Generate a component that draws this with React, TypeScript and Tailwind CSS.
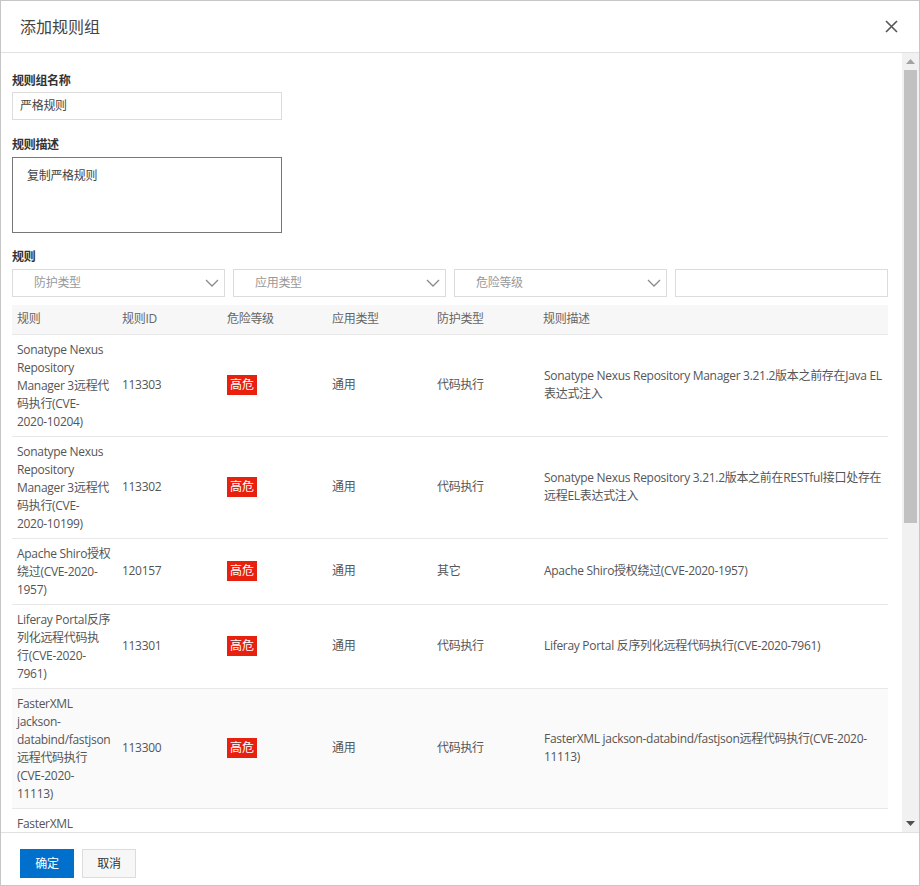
import React from 'react';

interface RuleRow {
  name: string[];
  id: string;
  level: string;
  app: string;
  guard: string;
  desc: string[];
  highlight?: boolean;
}

const rows: RuleRow[] = [
  {
    name: ['Sonatype Nexus', 'Repository', 'Manager 3远程代', '码执行(CVE-', '2020-10204)'],
    id: '113303',
    level: '高危',
    app: '通用',
    guard: '代码执行',
    desc: ['Sonatype Nexus Repository Manager 3.21.2版本之前存在Java EL', '表达式注入'],
  },
  {
    name: ['Sonatype Nexus', 'Repository', 'Manager 3远程代', '码执行(CVE-', '2020-10199)'],
    id: '113302',
    level: '高危',
    app: '通用',
    guard: '代码执行',
    desc: ['Sonatype Nexus Repository 3.21.2版本之前在RESTful接口处存在', '远程EL表达式注入'],
  },
  {
    name: ['Apache Shiro授权', '绕过(CVE-2020-', '1957)'],
    id: '120157',
    level: '高危',
    app: '通用',
    guard: '其它',
    desc: ['Apache Shiro授权绕过(CVE-2020-1957)'],
  },
  {
    name: ['Liferay Portal反序', '列化远程代码执', '行(CVE-2020-', '7961)'],
    id: '113301',
    level: '高危',
    app: '通用',
    guard: '代码执行',
    desc: ['Liferay Portal 反序列化远程代码执行(CVE-2020-7961)'],
  },
  {
    name: ['FasterXML', 'jackson-', 'databind/fastjson', '远程代码执行', '(CVE-2020-', '11113)'],
    id: '113300',
    level: '高危',
    app: '通用',
    guard: '代码执行',
    desc: ['FasterXML jackson-databind/fastjson远程代码执行(CVE-2020-', '11113)'],
    highlight: true,
  },
];

const Chevron = () => (
  <svg width="14" height="8" viewBox="0 0 14 8" fill="none" className="shrink-0">
    <polyline points="1,1 7,7 13,1" stroke="#8a8a8a" strokeWidth="1.3" />
  </svg>
);

const FilterSelect = ({ label }: { label: string }) => (
  <div className="flex h-[28px] items-center justify-between border border-[#dcdcdc] bg-white pl-[21px] pr-[5px]">
    <span className="text-[#999]">{label}</span>
    <Chevron />
  </div>
);

const Lines = ({ lines }: { lines: string[] }) => (
  <div>
    {lines.map((l, i) => (
      <div key={i} className="whitespace-nowrap">
        {l}
      </div>
    ))}
  </div>
);

export default function App() {
  return (
    <div
      className="flex h-[886px] w-[920px] flex-col border border-[#c6c6c6] bg-white text-[12px] leading-[18px] tracking-[-0.3px] text-[#555]"
      style={{ fontFamily: '"Open Sans", "Noto Sans CJK SC", sans-serif' }}
    >
      <div className="flex h-[52px] shrink-0 items-center justify-between border-b border-[#e1e1e1] pl-[19px] pr-[21px]">
        <span className="text-[16px] tracking-normal text-[#444]">添加规则组</span>
        <svg width="13" height="13" viewBox="0 0 13 13">
          <path d="M1 1L12 12M12 1L1 12" stroke="#555" strokeWidth="1.6" />
        </svg>
      </div>

      <div className="flex min-h-0 flex-1">
        <div className="min-w-0 flex-1 overflow-hidden pl-[11px] pr-[14px] pt-[19px]">
          <div className="font-bold text-[#333]">规则组名称</div>
          <div className="mt-[2px] flex h-[28px] w-[270px] items-center border border-[#dcdcdc] pl-[7px] text-[#444]">
            严格规则
          </div>

          <div className="mt-4 font-bold text-[#333]">规则描述</div>
          <div className="mt-[3px] h-[76px] w-[270px] border border-[#777] pl-[14px] pt-[9px] text-[#444]">
            复制严格规则
          </div>

          <div className="mt-[15px] font-bold text-[#333]">规则</div>
          <div className="mt-[3px] grid w-[876px] grid-cols-4 gap-2">
            <FilterSelect label="防护类型" />
            <FilterSelect label="应用类型" />
            <FilterSelect label="危险等级" />
            <div className="h-[28px] border border-[#dcdcdc] bg-white" />
          </div>

          <table className="mt-2 w-[876px] table-fixed border-collapse">
            <colgroup>
              <col className="w-[105px]" />
              <col className="w-[105px]" />
              <col className="w-[105px]" />
              <col className="w-[105px]" />
              <col className="w-[106px]" />
              <col />
            </colgroup>
            <thead>
              <tr className="h-[29px] border-b border-[#e8e8e8] bg-[#f7f7f7] text-left text-[#666]">
                <th className="pl-[5px] font-normal">规则</th>
                <th className="pl-[5px] font-normal">规则ID</th>
                <th className="pl-[5px] font-normal">危险等级</th>
                <th className="pl-[5px] font-normal">应用类型</th>
                <th className="pl-[5px] font-normal">防护类型</th>
                <th className="pl-[5px] font-normal">规则描述</th>
              </tr>
            </thead>
            <tbody>
              {rows.map((r) => (
                <tr
                  key={r.id}
                  className={`border-b border-[#e8e8e8] align-middle ${r.highlight ? 'bg-[#fafafa]' : 'bg-white'}`}
                >
                  <td className="pb-[5px] pl-[5px] pt-[6px]">
                    <Lines lines={r.name} />
                  </td>
                  <td className="pl-[5px]">{r.id}</td>
                  <td className="pl-[5px]">
                    <span className="inline-block bg-[#e8200e] px-[3px] leading-[20px] tracking-normal text-white">
                      {r.level}
                    </span>
                  </td>
                  <td className="pl-[5px]">{r.app}</td>
                  <td className="pl-[5px]">{r.guard}</td>
                  <td className="pl-[6px]">
                    <Lines lines={r.desc} />
                  </td>
                </tr>
              ))}
              <tr className="bg-white align-top">
                <td className="pb-[90px] pl-[5px] pt-[6px]">FasterXML</td>
                <td />
                <td />
                <td />
                <td />
                <td />
              </tr>
            </tbody>
          </table>
        </div>

        <div className="flex w-[17px] shrink-0 flex-col bg-[#f1f1f1]">
          <div className="flex h-[17px] items-center justify-center">
            <svg width="9" height="5" viewBox="0 0 9 5">
              <polygon points="0,5 4.5,0 9,5" fill="#a3a3a3" />
            </svg>
          </div>
          <div className="ml-[2px] h-[453px] w-[13px] bg-[#c1c1c1]" />
          <div className="flex-1" />
          <div className="flex h-[17px] items-center justify-center">
            <svg width="9" height="5" viewBox="0 0 9 5">
              <polygon points="0,0 9,0 4.5,5" fill="#505050" />
            </svg>
          </div>
        </div>
      </div>

      <div className="flex h-[53px] shrink-0 items-start gap-2 border-t border-[#e1e1e1] pl-[19px] pt-4">
        <button className="flex h-[29px] w-[54px] items-center justify-center bg-[#0070cc] text-[12px] leading-[18px] text-white">
          确定
        </button>
        <button className="flex h-[29px] w-[54px] items-center justify-center border border-[#dcdcdc] bg-[#f7f7f7] text-[12px] leading-[18px] text-[#333]">
          取消
        </button>
      </div>
    </div>
  );
}
